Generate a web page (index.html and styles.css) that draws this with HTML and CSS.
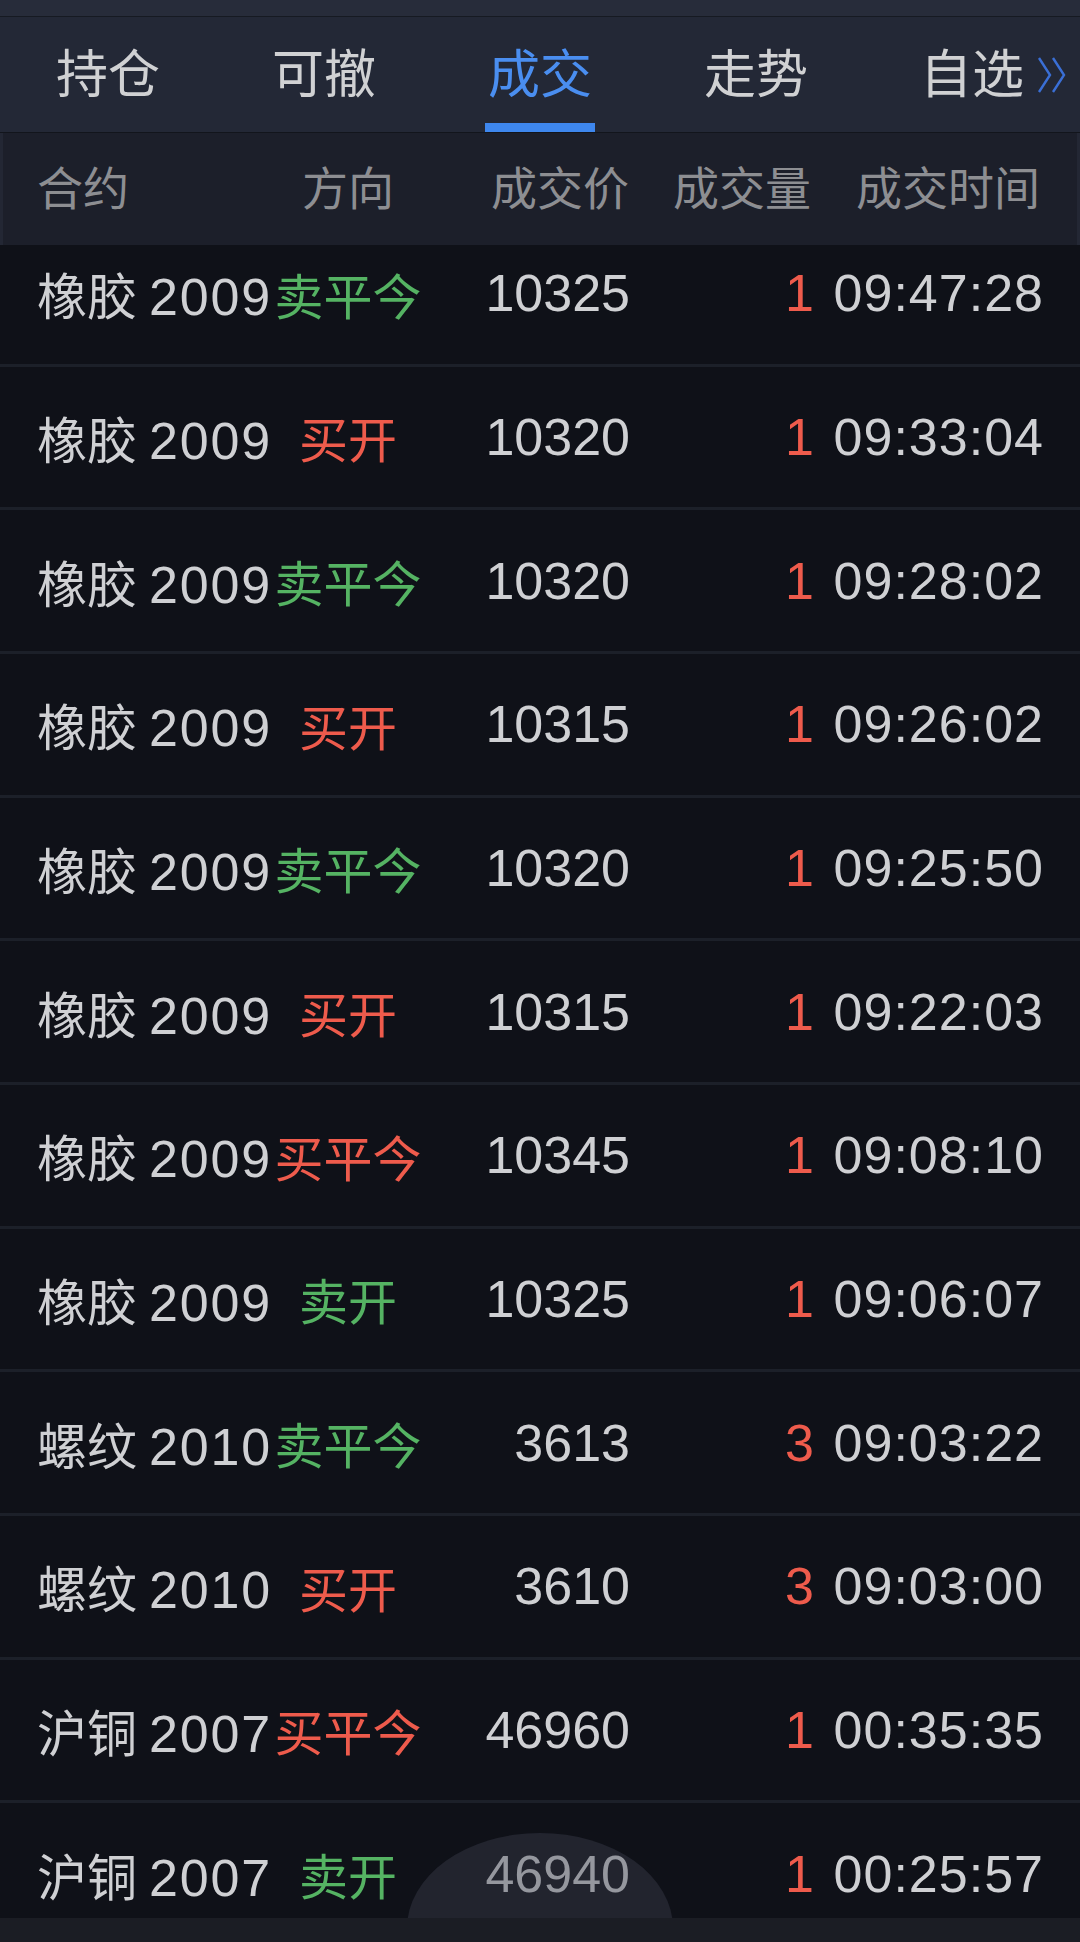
FILE: index.html
```html
<!DOCTYPE html>
<html lang="zh-CN">
<head>
  <meta charset="UTF-8">
  <meta name="viewport" content="width=device-width, initial-scale=1.0">
  <title>成交</title>
  <link rel="stylesheet" href="styles.css">
</head>
<body>
  <div class="app">
    <div class="status-strip"></div>

    <!-- 顶部标签 -->
    <div class="tabs">
      <div class="tab"><span>持仓</span></div>
      <div class="tab"><span>可撤</span></div>
      <div class="tab active"><span>成交</span></div>
      <div class="tab"><span>走势</span></div>
      <div class="tab more">
        <span>自选</span>
        <svg class="more-icon" width="32" height="40" viewBox="0 0 32 40">
          <path d="M3 3 L14 20 L3 37 M17 3 L28 20 L17 37" fill="none" stroke="#3a6fd6" stroke-width="2.4" stroke-linejoin="miter"/>
        </svg>
      </div>
    </div>

    <!-- 表头 -->
    <div class="head-row">
      <div class="c-name">合约</div>
      <div class="c-dir">方向</div>
      <div class="c-price">成交价</div>
      <div class="c-qty">成交量</div>
      <div class="c-time">成交时间</div>
    </div>

    <div class="list">
      <div class="list-inner">
        <div class="row">
          <div class="c-name"><span class="cn">橡胶</span><span class="num">2009</span></div>
          <div class="c-dir sell">卖平今</div>
          <div class="c-price">10325</div>
          <div class="c-qty">1</div>
          <div class="c-time">09:47:28</div>
        </div>
        <div class="row">
          <div class="c-name"><span class="cn">橡胶</span><span class="num">2009</span></div>
          <div class="c-dir buy">买开</div>
          <div class="c-price">10320</div>
          <div class="c-qty">1</div>
          <div class="c-time">09:33:04</div>
        </div>
        <div class="row">
          <div class="c-name"><span class="cn">橡胶</span><span class="num">2009</span></div>
          <div class="c-dir sell">卖平今</div>
          <div class="c-price">10320</div>
          <div class="c-qty">1</div>
          <div class="c-time">09:28:02</div>
        </div>
        <div class="row">
          <div class="c-name"><span class="cn">橡胶</span><span class="num">2009</span></div>
          <div class="c-dir buy">买开</div>
          <div class="c-price">10315</div>
          <div class="c-qty">1</div>
          <div class="c-time">09:26:02</div>
        </div>
        <div class="row">
          <div class="c-name"><span class="cn">橡胶</span><span class="num">2009</span></div>
          <div class="c-dir sell">卖平今</div>
          <div class="c-price">10320</div>
          <div class="c-qty">1</div>
          <div class="c-time">09:25:50</div>
        </div>
        <div class="row">
          <div class="c-name"><span class="cn">橡胶</span><span class="num">2009</span></div>
          <div class="c-dir buy">买开</div>
          <div class="c-price">10315</div>
          <div class="c-qty">1</div>
          <div class="c-time">09:22:03</div>
        </div>
        <div class="row">
          <div class="c-name"><span class="cn">橡胶</span><span class="num">2009</span></div>
          <div class="c-dir buy">买平今</div>
          <div class="c-price">10345</div>
          <div class="c-qty">1</div>
          <div class="c-time">09:08:10</div>
        </div>
        <div class="row">
          <div class="c-name"><span class="cn">橡胶</span><span class="num">2009</span></div>
          <div class="c-dir sell">卖开</div>
          <div class="c-price">10325</div>
          <div class="c-qty">1</div>
          <div class="c-time">09:06:07</div>
        </div>
        <div class="row">
          <div class="c-name"><span class="cn">螺纹</span><span class="num">2010</span></div>
          <div class="c-dir sell">卖平今</div>
          <div class="c-price">3613</div>
          <div class="c-qty">3</div>
          <div class="c-time">09:03:22</div>
        </div>
        <div class="row">
          <div class="c-name"><span class="cn">螺纹</span><span class="num">2010</span></div>
          <div class="c-dir buy">买开</div>
          <div class="c-price">3610</div>
          <div class="c-qty">3</div>
          <div class="c-time">09:03:00</div>
        </div>
        <div class="row">
          <div class="c-name"><span class="cn">沪铜</span><span class="num">2007</span></div>
          <div class="c-dir buy">买平今</div>
          <div class="c-price">46960</div>
          <div class="c-qty">1</div>
          <div class="c-time">00:35:35</div>
        </div>
        <div class="row">
          <div class="c-name"><span class="cn">沪铜</span><span class="num">2007</span></div>
          <div class="c-dir sell">卖开</div>
          <div class="c-price">46940</div>
          <div class="c-qty">1</div>
          <div class="c-time">00:25:57</div>
        </div>
      </div>
    </div>

    <!-- 悬浮按钮（半露） -->
    <div class="float-dome"></div>

    <div class="bottom-bar"></div>
  </div>
</body>
</html>
```

FILE: styles.css
```css
html, body { margin: 0; padding: 0; }
body {
  background: #0f1118;
  font-family: "Liberation Sans", "Noto Sans CJK SC", sans-serif;
  color: #cfd0d3;
}

.app {
  position: relative;
  height: 1942px;
  display: flex;
  flex-direction: column;
  overflow: hidden;
}

.status-strip {
  height: 16px;
  background: #272c3a;
  border-bottom: 1px solid #161a22;
  flex: none;
}

/* 标签栏 */
.tabs {
  height: 115px;
  background: #232836;
  display: grid;
  grid-template-columns: repeat(5, 1fr);
  flex: none;
}
.tab {
  display: flex;
  justify-content: center;
  font-size: 52px;
  color: #d0d1d3;
  position: relative;
}
.tab span {
  display: flex;
  align-items: center;
  height: 100%;
  box-sizing: border-box;
  padding: 0 3px 4px;
  border-top: 5px solid transparent;
  border-bottom: 9px solid transparent;
}
.tab.active { color: #4a8ef0; }
.tab.active span { border-bottom-color: #3e87ee; }
.more-icon {
  position: absolute;
  left: 172px;
  top: 38px;
}

/* 表头 */
.head-row {
  height: 113px;
  box-sizing: border-box;
  background: #1c1f2a;
  border-top: 1px solid #12151c;
  box-shadow: inset 3px 0 #232734, inset -3px 0 #232734;
  display: grid;
  grid-template-columns: 211px 200px 181px 182px 1fr;
  align-items: center;
  padding: 0 40px 8px 37px;
  font-size: 46px;
  color: #8d8e92;
  flex: none;
}

.c-name { text-align: left; white-space: nowrap; }
.c-dir { text-align: center; white-space: nowrap; }
.c-price, .c-qty, .c-time { text-align: right; white-space: nowrap; }

/* 列表 */
.list {
  flex: 1;
  overflow: hidden;
}
.list-inner { margin-top: -22px; }

.row {
  height: 143.66px;
  box-sizing: border-box;
  border-bottom: 3px solid #1c2029;
  display: grid;
  grid-template-columns: 211px 200px 182px 184px 1fr;
  align-items: center;
  padding: 0 37px;
  font-size: 52px;
}
.row .cn { font-size: 50px; }
.row .num { margin-left: 12px; letter-spacing: 1.8px; }
.row .c-dir { font-size: 49px; }
.row .c-qty { color: #ee5b4c; }
.row .c-time { letter-spacing: 1px; margin-right: -1px; }

.buy { color: #ee5b4c; }
.sell { color: #55b363; }

.float-dome {
  position: absolute;
  left: 407px;
  top: 1833px;
  width: 266px;
  height: 190px;
  border-radius: 50%;
  background: rgba(62, 66, 80, 0.4);
}

.bottom-bar {
  height: 24px;
  background: #1b1d24;
  flex: none;
  position: relative;
  z-index: 2;
}
```
